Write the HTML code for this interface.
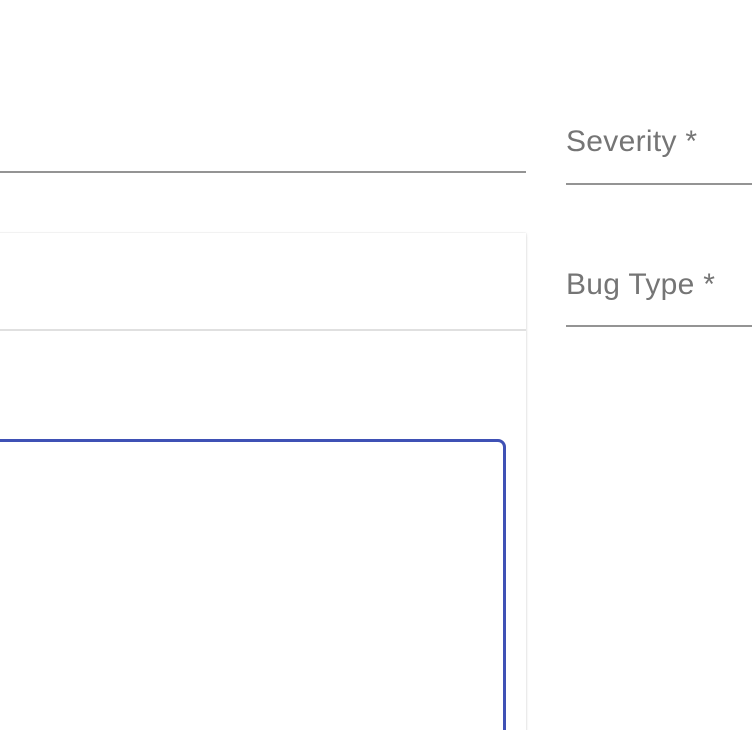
<!DOCTYPE html>
<html><head><style>
html,body{margin:0;padding:0;width:752px;height:730px;overflow:hidden;background:#fff;font-family:"Liberation Sans",Roboto,sans-serif;position:relative}
.a{position:absolute}
.lbl{color:#757575;font-size:30px;line-height:1;letter-spacing:0.3px}
</style></head><body>
<div class="a" style="left:0;top:171px;width:526px;height:2px;background:#949494"></div>
<div class="a lbl" style="left:566px;top:127px">Severity *</div>
<div class="a" style="left:566px;top:183px;width:186px;height:2px;background:#949494"></div>
<div class="a lbl" style="left:566px;top:270px">Bug Type *</div>
<div class="a" style="left:566px;top:325px;width:186px;height:2px;background:#949494"></div>
<div class="a" style="left:-10px;top:233px;width:536px;height:520px;background:#fff;box-shadow:0 1px 3px rgba(0,0,0,0.15),0 0 1px rgba(0,0,0,0.12)"></div>
<div class="a" style="left:0;top:329px;width:526px;height:2px;background:#e0e0e0"></div>
<div class="a" style="left:-20px;top:439px;width:520px;height:320px;border:3px solid #3f51b5;border-radius:8px"></div>
</body></html>
